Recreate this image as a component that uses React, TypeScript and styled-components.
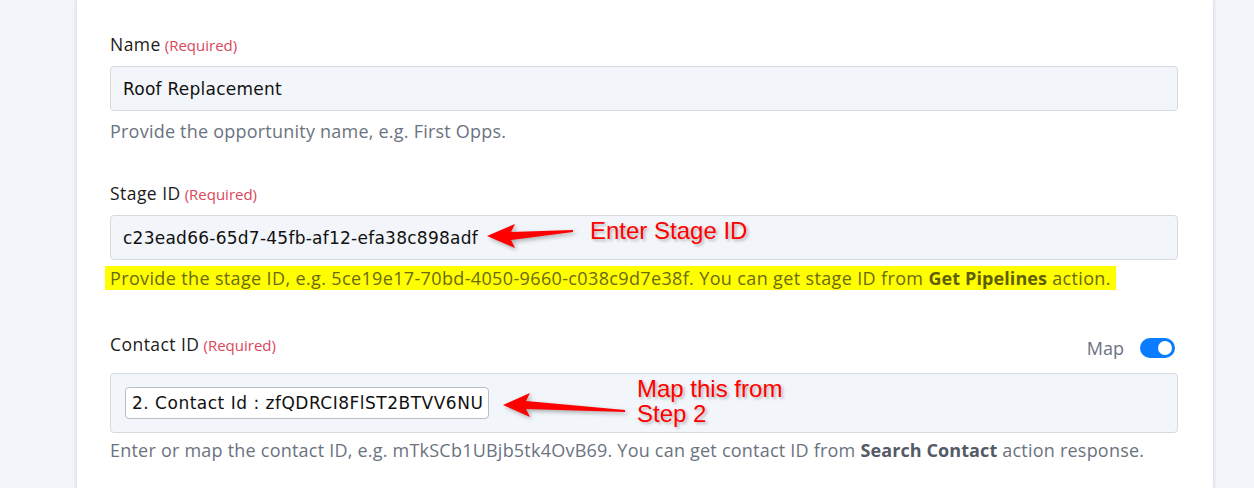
import React from "react";
import styled, { createGlobalStyle } from "styled-components";

const Global = createGlobalStyle`
  html, body { margin: 0; padding: 0; }
  body {
    background: #f2f5f9;
    font-family: "Open Sans", Lato, sans-serif;
    width: 1254px;
    height: 488px;
    overflow: hidden;
  }
`;

const Page = styled.div`
  display: flex;
  height: 488px;
  padding-left: 77px;
`;

const Card = styled.div`
  position: relative;
  width: 1136px;
  background: #ffffff;
  box-shadow: -1px 0 3px rgba(170, 180, 200, 0.35), 1px 0 3px rgba(170, 180, 200, 0.35);
  padding: 33px 35px 0 33px;
  box-sizing: border-box;
  display: flex;
  flex-direction: column;
`;

const Field = styled.div<{ $gap?: number }>`
  display: flex;
  flex-direction: column;
  margin-bottom: ${(p) => p.$gap ?? 39}px;
`;

const LabelRow = styled.div`
  display: flex;
  align-items: flex-start;
  justify-content: space-between;
  height: 22px;
`;

const Label = styled.div`
  font-size: 17.5px;
  letter-spacing: 0.45px;
  color: #1a1a1a;
  line-height: 22px;
`;

const Req = styled.span`
  font-size: 15px;
  letter-spacing: 0;
  color: #d9475a;
  margin-left: 4px;
`;

const Input = styled.div<{ $tall?: boolean }>`
  position: relative;
  margin-top: ${(p) => (p.$tall ? 18 : 11)}px;
  height: ${(p) => (p.$tall ? 58 : 43)}px;
  border: 1px solid #d5d9e0;
  border-radius: 4px;
  background: #f2f5f9;
  display: flex;
  align-items: center;
  padding: 0 12px;
  font-family: "DejaVu Sans", Verdana, sans-serif;
  font-size: 17px;
  letter-spacing: 0.25px;
  color: #111;
`;

const Chip = styled.div`
  height: 30px;
  border: 1px solid #b9bec6;
  border-radius: 4px;
  background: #fff;
  display: flex;
  align-items: center;
  padding: 0 5px 0 6px;
  margin-left: 2px;
  font-family: "DejaVu Sans", Verdana, sans-serif;
  font-size: 17px;
  letter-spacing: 0.5px;
  color: #111;
  white-space: nowrap;
`;

const Help = styled.div<{ $hl?: boolean; $mt?: number }>`
  margin-top: ${(p) => p.$mt ?? 8}px;
  font-size: 18px;
  letter-spacing: ${(p) => (p.$hl ? 0.36 : 0.22)}px;
  line-height: 24px;
  color: ${(p) => (p.$hl ? "#6a6a12" : "#6b7380")};
  align-self: flex-start;
  white-space: nowrap;
  background: ${(p) => (p.$hl ? "#ffff00" : "transparent")};
  padding: ${(p) => (p.$hl ? "0 5px 0 5px" : "0")};
  margin-left: ${(p) => (p.$hl ? -5 : 0)}px;
  b { color: ${(p) => (p.$hl ? "#5e5e08" : "#545b66")}; font-weight: 700; letter-spacing: 0.1px; }
`;

const MapToggle = styled.div`
  display: flex;
  align-items: center;
  gap: 16px;
  margin-top: 3px;
  margin-right: 3px;
  font-size: 18px;
  color: #6b7380;
`;

const Switch = styled.div`
  width: 35px;
  height: 20px;
  border-radius: 10px;
  background: #0a7cff;
  position: relative;
  &::after {
    content: "";
    position: absolute;
    right: 3px;
    top: 3px;
    width: 14px;
    height: 14px;
    border-radius: 50%;
    background: #fff;
  }
`;

const Note = styled.div<{ $x: number; $y: number }>`
  position: absolute;
  left: ${(p) => p.$x}px;
  top: ${(p) => p.$y}px;
  font-family: "Liberation Sans", Arial, sans-serif;
  font-size: 24px;
  line-height: 25px;
  color: #ff0000;
  text-shadow: 2px 2px 3px rgba(0, 0, 0, 0.25);
  white-space: nowrap;
`;

const ArrowSvg = styled.svg<{ $x: number; $y: number }>`
  position: absolute;
  left: ${(p) => p.$x}px;
  top: ${(p) => p.$y}px;
  overflow: visible;
  filter: drop-shadow(2px 2px 2px rgba(0, 0, 0, 0.3));
`;

function Arrow({ x, y, len, head, rise }: { x: number; y: number; len: number; head: number; rise: number }) {
  const ty = 12 - rise;
  return (
    <ArrowSvg $x={x} $y={y} width={len} height={24}>
      <path
        d={`M0 12 L${head} 0 L${head - 4} 8 L${len} ${ty - 1} L${len} ${ty + 1} L${head - 4} 16 L${head} 24 Z`}
        fill="#ff0000"
      />
    </ArrowSvg>
  );
}

export default function App() {
  return (
    <>
      <Global />
      <Page>
        <Card>
          <Field $gap={39}>
            <LabelRow>
              <Label>
                Name<Req>(Required)</Req>
              </Label>
            </LabelRow>
            <Input>Roof Replacement</Input>
            <Help>Provide the opportunity name, e.g. First Opps.</Help>
          </Field>
          <Field $gap={43}>
            <LabelRow>
              <Label>
                Stage ID<Req>(Required)</Req>
              </Label>
            </LabelRow>
            <Input>c23ead66-65d7-45fb-af12-efa38c898adf</Input>
            <Help $hl $mt={6}>
              Provide the stage ID, e.g. 5ce19e17-70bd-4050-9660-c038c9d7e38f. You can get stage ID from{" "}
              <b>Get Pipelines</b> action.
            </Help>
          </Field>
          <Field>
            <LabelRow>
              <Label>
                Contact ID<Req>(Required)</Req>
              </Label>
              <MapToggle>
                Map
                <Switch />
              </MapToggle>
            </LabelRow>
            <Input $tall>
              <Chip>2. Contact Id : zfQDRCI8FlST2BTVV6NU</Chip>
            </Input>
            <Help $mt={5}>
              Enter or map the contact ID, e.g. mTkSCb1UBjb5tk4OvB69. You can get contact ID from{" "}
              <b>Search Contact</b> action response.
            </Help>
          </Field>
          <Arrow x={410} y={224} len={86} head={28} rise={5} />
          <Note $x={513} $y={218}>Enter Stage ID</Note>
          <Arrow x={426} y={393} len={122} head={27} rise={-6} />
          <Note $x={560} $y={376}>
            Map this from
            <br />
            Step 2
          </Note>
        </Card>
      </Page>
    </>
  );
}
